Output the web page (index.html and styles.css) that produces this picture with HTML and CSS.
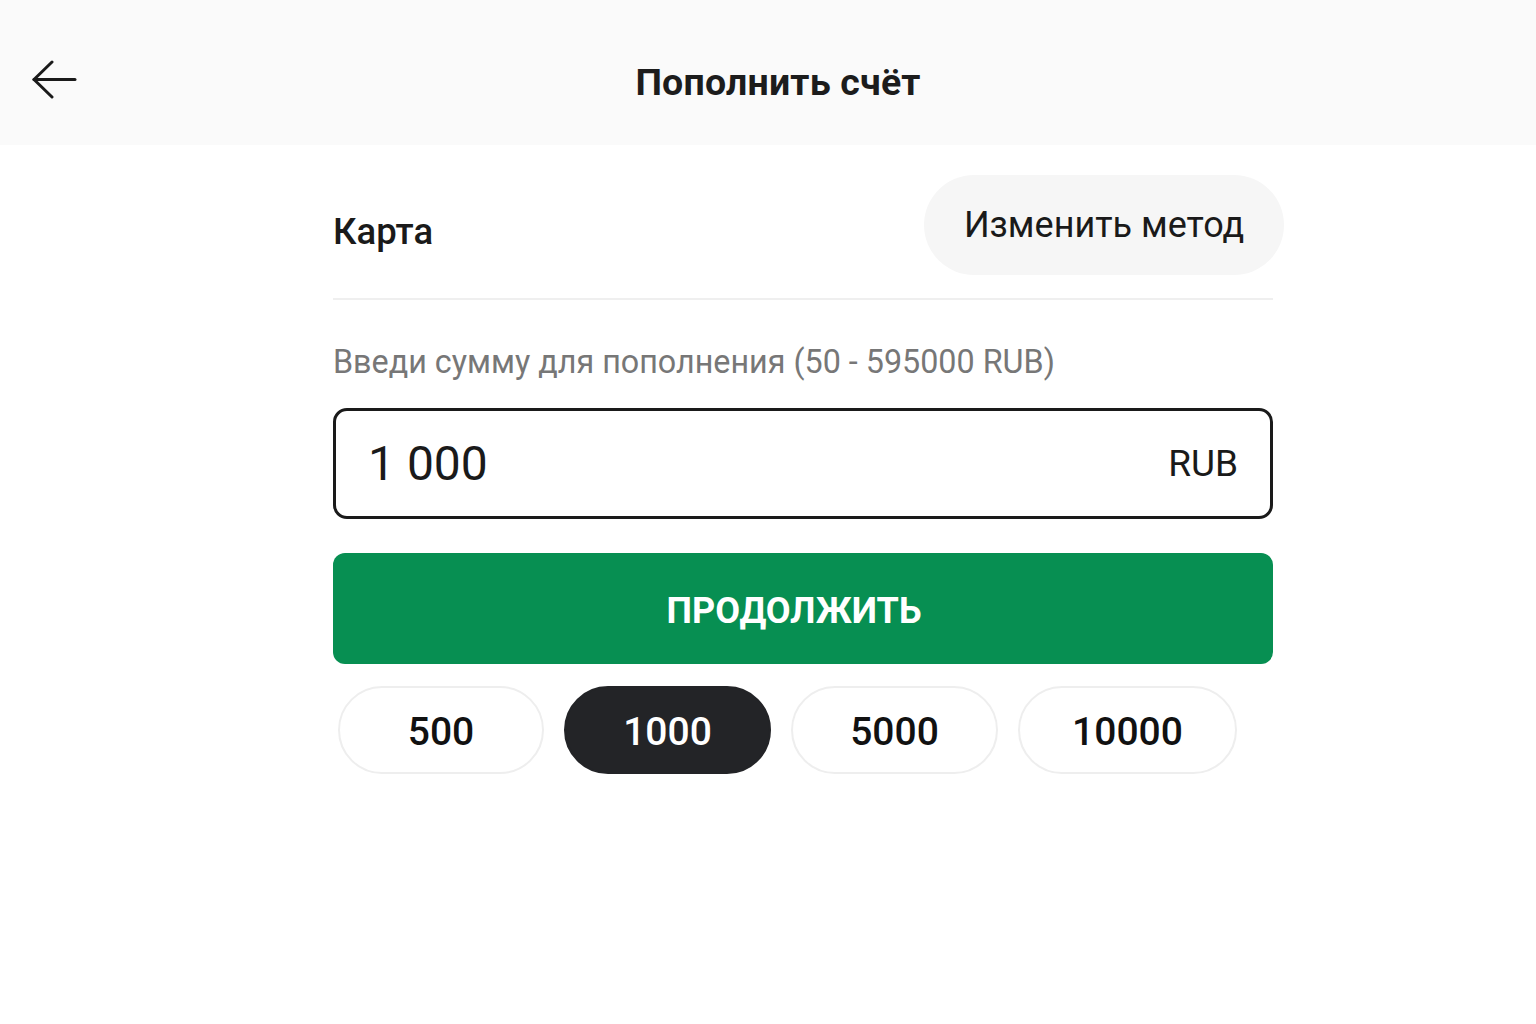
FILE: index.html
```html
<!DOCTYPE html>
<html lang="ru">
<head>
<meta charset="utf-8">
<title>Пополнить счёт</title>
<link rel="stylesheet" href="styles.css">
</head>
<body>
<header class="topbar">
  <button class="back" aria-label="Назад">
    <svg width="46" height="40" viewBox="0 0 46 40" fill="none" stroke="#1a1a1a" stroke-width="3" stroke-linecap="round" stroke-linejoin="round">
      <path d="M44 19.5H3"/>
      <path d="M21 2 3 19.5 21 37"/>
    </svg>
  </button>
  <h1 class="title">Пополнить счёт</h1>
</header>
<main class="content">
  <div class="method-row">
    <span class="method">Карта</span>
    <button class="change">Изменить метод</button>
  </div>
  <div class="divider"></div>
  <p class="label">Введи сумму для пополнения (50 - 595000 RUB)</p>
  <div class="amount">
    <span class="value">1 000</span>
    <span class="currency">RUB</span>
  </div>
  <button class="continue">ПРОДОЛЖИТЬ</button>
  <div class="chips">
    <button class="chip w1">500</button>
    <button class="chip w2 active">1000</button>
    <button class="chip w3">5000</button>
    <button class="chip w4">10000</button>
  </div>
</main>
</body>
</html>
```

FILE: styles.css
```css
* { box-sizing: border-box; }
html, body { margin: 0; padding: 0; background: #ffffff; }
body {
  font-family: Roboto, "Noto Sans", "Liberation Sans", sans-serif;
  color: #1a1a1a;
  width: 1536px;
  min-height: 1024px;
}
button { font-family: inherit; border: none; cursor: pointer; }

.topbar {
  height: 145px;
  background: #fafafa;
  display: flex;
  align-items: center;
  justify-content: center;
  position: relative;
}
.back {
  position: absolute;
  left: 31px;
  top: 60px;
  background: transparent;
  padding: 0;
  display: flex;
}
.title {
  margin: 0 0 0 20px;
  font-size: 37.5px;
  font-weight: 700;
  color: #1c1c1c;
  letter-spacing: 0.2px;
  padding-top: 18px;
}

.content {
  width: 940px;
  margin: 0 0 0 333px;
  padding-top: 30px;
  display: flex;
  flex-direction: column;
}
.method-row {
  display: flex;
  align-items: center;
  justify-content: space-between;
  height: 100px;
  margin-right: -11px;
}
.method {
  font-size: 36.5px;
  font-weight: 500;
  color: #1a1a1a;
  padding-top: 12px;
}
.change {
  width: 360px;
  height: 100px;
  border-radius: 50px;
  background: #f6f6f6;
  font-size: 36px;
  color: #1a1a1a;
  font-weight: 400;
  padding: 0;
}
.divider {
  height: 2px;
  background: #efefef;
  margin-top: 23px;
}
.label {
  margin: 42px 0 0;
  font-size: 32.3px;
  color: #777777;
  line-height: 40px;
}
.amount {
  margin-top: 26px;
  height: 111px;
  border: 3px solid #1a1a1a;
  border-radius: 14px;
  display: flex;
  align-items: center;
  justify-content: space-between;
  padding: 0 32px;
}
.value {
  font-size: 48px;
  font-weight: 400;
  color: #1a1a1a;
}
.currency {
  font-size: 37px;
  color: #1a1a1a;
}
.continue {
  margin-top: 34px;
  height: 111px;
  border-radius: 12px;
  background: #078f52;
  color: #ffffff;
  font-size: 36px;
  font-weight: 700;
  padding: 4px 18px 0 0;
}
.chips {
  margin-top: 22px;
  display: flex;
  gap: 20px;
  padding-left: 5px;
}
.chip {
  height: 88px;
  border-radius: 44px;
  border: 2px solid #eeeeee;
  background: #ffffff;
  color: #111111;
  font-size: 39px;
  font-weight: 500;
  padding: 4px 0 0;
}
.chip.w1 { width: 206px; }
.chip.w2 { width: 207px; }
.chip.w3 { width: 207px; }
.chip.w4 { width: 219px; }
.chip.active {
  background: #232427;
  border-color: #232427;
  color: #ffffff;
}
```
